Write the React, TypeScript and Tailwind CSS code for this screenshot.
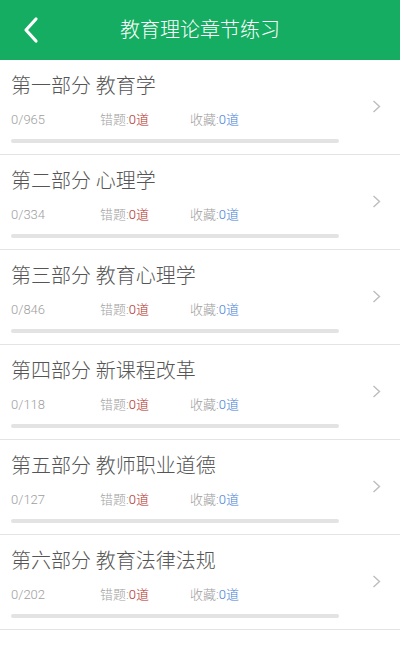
const chapters = [
  { title: "第一部分 教育学", total: 965 },
  { title: "第二部分 心理学", total: 334 },
  { title: "第三部分 教育心理学", total: 846 },
  { title: "第四部分 新课程改革", total: 118 },
  { title: "第五部分 教师职业道德", total: 127 },
  { title: "第六部分 教育法律法规", total: 202 },
];

const font = { fontFamily: 'Roboto, "Noto Sans CJK SC", sans-serif' };

function Row({ title, total }: { title: string; total: number }) {
  return (
    <div className="flex h-[95px] items-start border-b border-[#e4e4e4] bg-white">
      <div className="flex flex-col pl-[11px]">
        <div className="mt-[12px] h-[28px] text-[20px] font-light leading-[28px] text-[#555555]">{title}</div>
        <div className="mt-[11px] flex h-[18px] text-[13px] font-light leading-[18px] text-[#9e9e9e]">
          <span className="w-[89px]">0/{total}</span>
          <span className="w-[90px]">
            错题:<span className="text-[#b02a26]">0道</span>
          </span>
          <span>
            收藏:<span className="text-[#3f7ed4]">0道</span>
          </span>
        </div>
        <div className="mt-[10px] h-[4px] w-[328px] rounded-full bg-[#e3e3e3]" />
      </div>
      <div className="ml-auto mr-[19px] mt-[40px]">
        <svg width="9" height="13" viewBox="0 0 9 13">
          <path d="M1.5 1 L7.5 6.5 L1.5 12" fill="none" stroke="#bdbdbd" strokeWidth="1.4" />
        </svg>
      </div>
    </div>
  );
}

export default function App() {
  return (
    <div className="min-h-[666px] w-[400px] bg-white" style={font}>
      <div className="grid h-[60px] grid-cols-[60px_1fr_60px] items-center bg-[#15ad62]">
        <div className="flex justify-center pl-[2px]">
          <svg width="18" height="28" viewBox="0 0 18 28">
            <path d="M14 3 L4 14 L14 25" fill="none" stroke="#ffffff" strokeWidth="3.2" strokeLinecap="round" strokeLinejoin="round" />
          </svg>
        </div>
        <div className="text-center text-[20px] font-light text-white">教育理论章节练习</div>
        <div />
      </div>
      {chapters.map((c) => (
        <Row key={c.title} title={c.title} total={c.total} />
      ))}
    </div>
  );
}
